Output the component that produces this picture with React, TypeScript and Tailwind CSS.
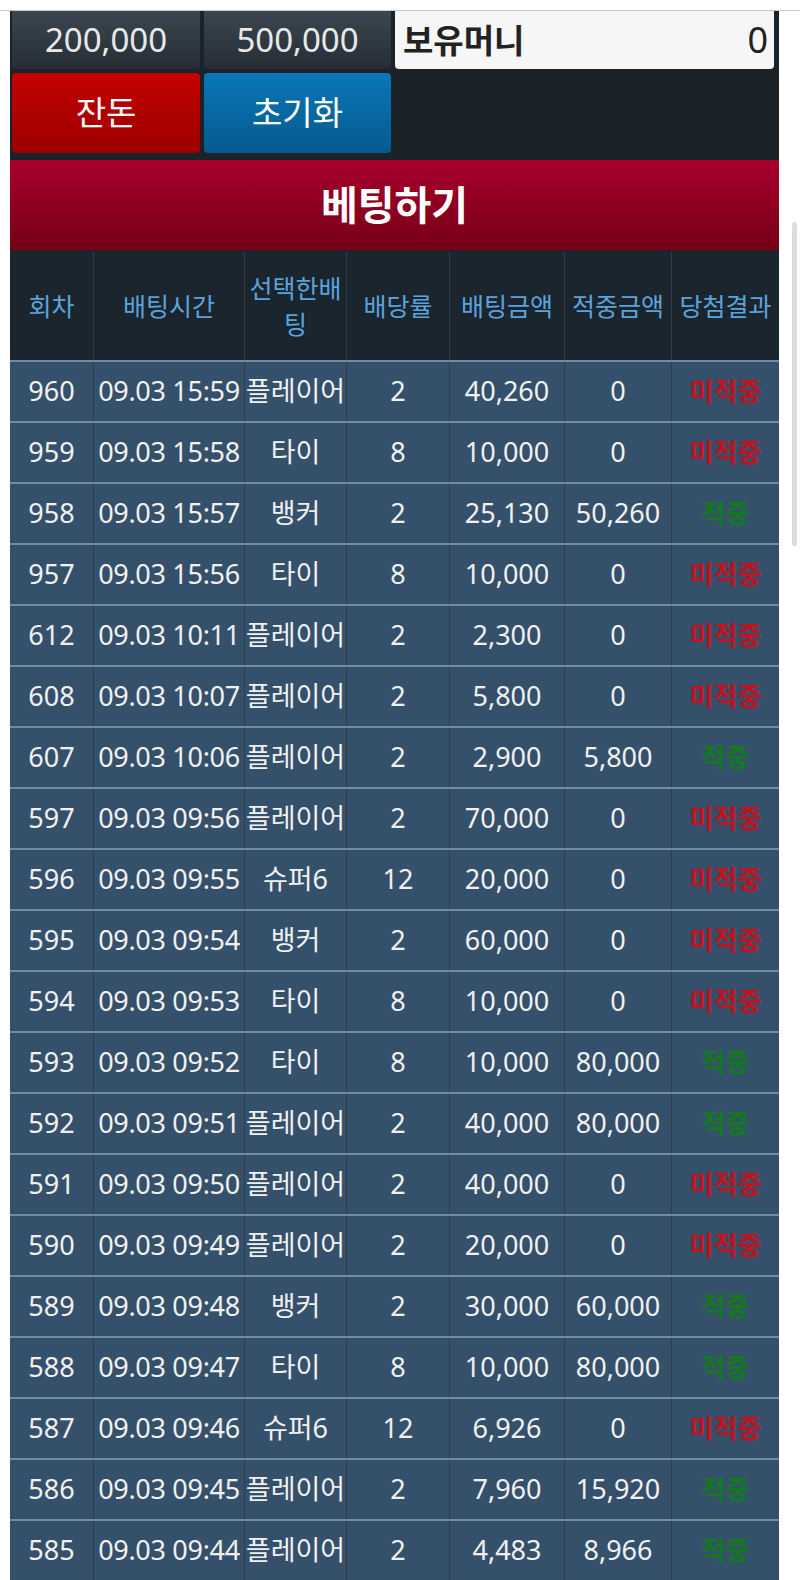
import React from 'react'

type Bet = {
  round: number
  time: string
  pick: string
  odds: number
  amount: string
  payout: string
  win: boolean
}

const bets: Bet[] = [
  { round: 960, time: '09.03 15:59', pick: '플레이어', odds: 2, amount: '40,260', payout: '0', win: false },
  { round: 959, time: '09.03 15:58', pick: '타이', odds: 8, amount: '10,000', payout: '0', win: false },
  { round: 958, time: '09.03 15:57', pick: '뱅커', odds: 2, amount: '25,130', payout: '50,260', win: true },
  { round: 957, time: '09.03 15:56', pick: '타이', odds: 8, amount: '10,000', payout: '0', win: false },
  { round: 612, time: '09.03 10:11', pick: '플레이어', odds: 2, amount: '2,300', payout: '0', win: false },
  { round: 608, time: '09.03 10:07', pick: '플레이어', odds: 2, amount: '5,800', payout: '0', win: false },
  { round: 607, time: '09.03 10:06', pick: '플레이어', odds: 2, amount: '2,900', payout: '5,800', win: true },
  { round: 597, time: '09.03 09:56', pick: '플레이어', odds: 2, amount: '70,000', payout: '0', win: false },
  { round: 596, time: '09.03 09:55', pick: '슈퍼6', odds: 12, amount: '20,000', payout: '0', win: false },
  { round: 595, time: '09.03 09:54', pick: '뱅커', odds: 2, amount: '60,000', payout: '0', win: false },
  { round: 594, time: '09.03 09:53', pick: '타이', odds: 8, amount: '10,000', payout: '0', win: false },
  { round: 593, time: '09.03 09:52', pick: '타이', odds: 8, amount: '10,000', payout: '80,000', win: true },
  { round: 592, time: '09.03 09:51', pick: '플레이어', odds: 2, amount: '40,000', payout: '80,000', win: true },
  { round: 591, time: '09.03 09:50', pick: '플레이어', odds: 2, amount: '40,000', payout: '0', win: false },
  { round: 590, time: '09.03 09:49', pick: '플레이어', odds: 2, amount: '20,000', payout: '0', win: false },
  { round: 589, time: '09.03 09:48', pick: '뱅커', odds: 2, amount: '30,000', payout: '60,000', win: true },
  { round: 588, time: '09.03 09:47', pick: '타이', odds: 8, amount: '10,000', payout: '80,000', win: true },
  { round: 587, time: '09.03 09:46', pick: '슈퍼6', odds: 12, amount: '6,926', payout: '0', win: false },
  { round: 586, time: '09.03 09:45', pick: '플레이어', odds: 2, amount: '7,960', payout: '15,920', win: true },
  { round: 585, time: '09.03 09:44', pick: '플레이어', odds: 2, amount: '4,483', payout: '8,966', win: true },
]

const cols = 'grid grid-cols-[84px_151px_102px_103px_115px_107px_107px]'
const cell = 'flex items-center justify-center border-r border-[#2c3c4a] last:border-r-0 whitespace-nowrap'

export default function App() {
  return (
    <div className="relative w-[800px] overflow-hidden bg-white font-['Noto_Sans','Noto_Sans_CJK_KR',sans-serif]">
      <div className="h-[11px] border-b border-[#c8c8c8] bg-white" />

      <div className="ml-[10px] w-[769px] bg-[#1c2328]">
        <div className="flex gap-[4px] px-[2px]">
          <div className="flex h-[58px] w-[188px] items-center justify-center rounded-b-[4px] bg-gradient-to-b from-[#3b4650] to-[#252e36] text-[33px] text-[#e8e8e8]">
            200,000
          </div>
          <div className="flex h-[58px] w-[187px] items-center justify-center rounded-b-[4px] bg-gradient-to-b from-[#3b4650] to-[#252e36] text-[33px] text-[#e8e8e8]">
            500,000
          </div>
          <div className="flex h-[58px] w-[379px] items-center justify-between rounded-b-[4px] bg-[#f6f6f6] pl-[8px] pr-[6px] text-[33px] font-bold text-[#222]">
            <span className="font-['Noto_Sans_CJK_KR',sans-serif]">보유머니</span>
            <span className="text-[36px] font-normal">0</span>
          </div>
        </div>

        <div className="mt-[4px] flex gap-[4px] px-[2px] pb-[7px]">
          <div className="flex h-[80px] w-[188px] items-center justify-center rounded-[4px] bg-gradient-to-b from-[#c40000] to-[#9c0000] text-[33px] text-white">
            잔돈
          </div>
          <div className="flex h-[80px] w-[187px] items-center justify-center rounded-[4px] bg-gradient-to-b from-[#0a77b8] to-[#055a8e] text-[33px] text-white">
            초기화
          </div>
        </div>

        <div className="flex h-[90px] items-center justify-center bg-gradient-to-b from-[#a8002a] to-[#760018] text-[40px] font-bold text-white">
          베팅하기
        </div>

        <div className={`${cols} mt-[2px] h-[108px] bg-[#1b252e] text-[25px] leading-[1.45] text-[#5ba3dc]`}>
          <div className={cell}>회차</div>
          <div className={cell}>배팅시간</div>
          <div className={`${cell} whitespace-normal text-center`}>
            선택한배
            <br />
            팅
          </div>
          <div className={cell}>배당률</div>
          <div className={cell}>배팅금액</div>
          <div className={cell}>적중금액</div>
          <div className={cell}>당첨결과</div>
        </div>

        {bets.map((bet) => (
          <div
            key={bet.round}
            className={`${cols} h-[61px] border-t-2 border-[#6f8ca4] bg-[#35506a] text-[27px] text-[#f0f0f0]`}
          >
            <div className={cell}>{bet.round}</div>
            <div className={`${cell} tracking-[-0.3px]`}>{bet.time}</div>
            <div className={cell}>{bet.pick}</div>
            <div className={cell}>{bet.odds}</div>
            <div className={cell}>{bet.amount}</div>
            <div className={cell}>{bet.payout}</div>
            <div
              className={`${cell} font-bold text-[26px] ${bet.win ? 'text-[#137a1e]' : 'text-[#c2121e]'}`}
            >
              {bet.win ? '적중' : '미적중'}
            </div>
          </div>
        ))}
      </div>

      <div className="absolute right-[3px] top-[222px] h-[324px] w-[5px] rounded-full bg-[#dcdcdc]" />
    </div>
  )
}
